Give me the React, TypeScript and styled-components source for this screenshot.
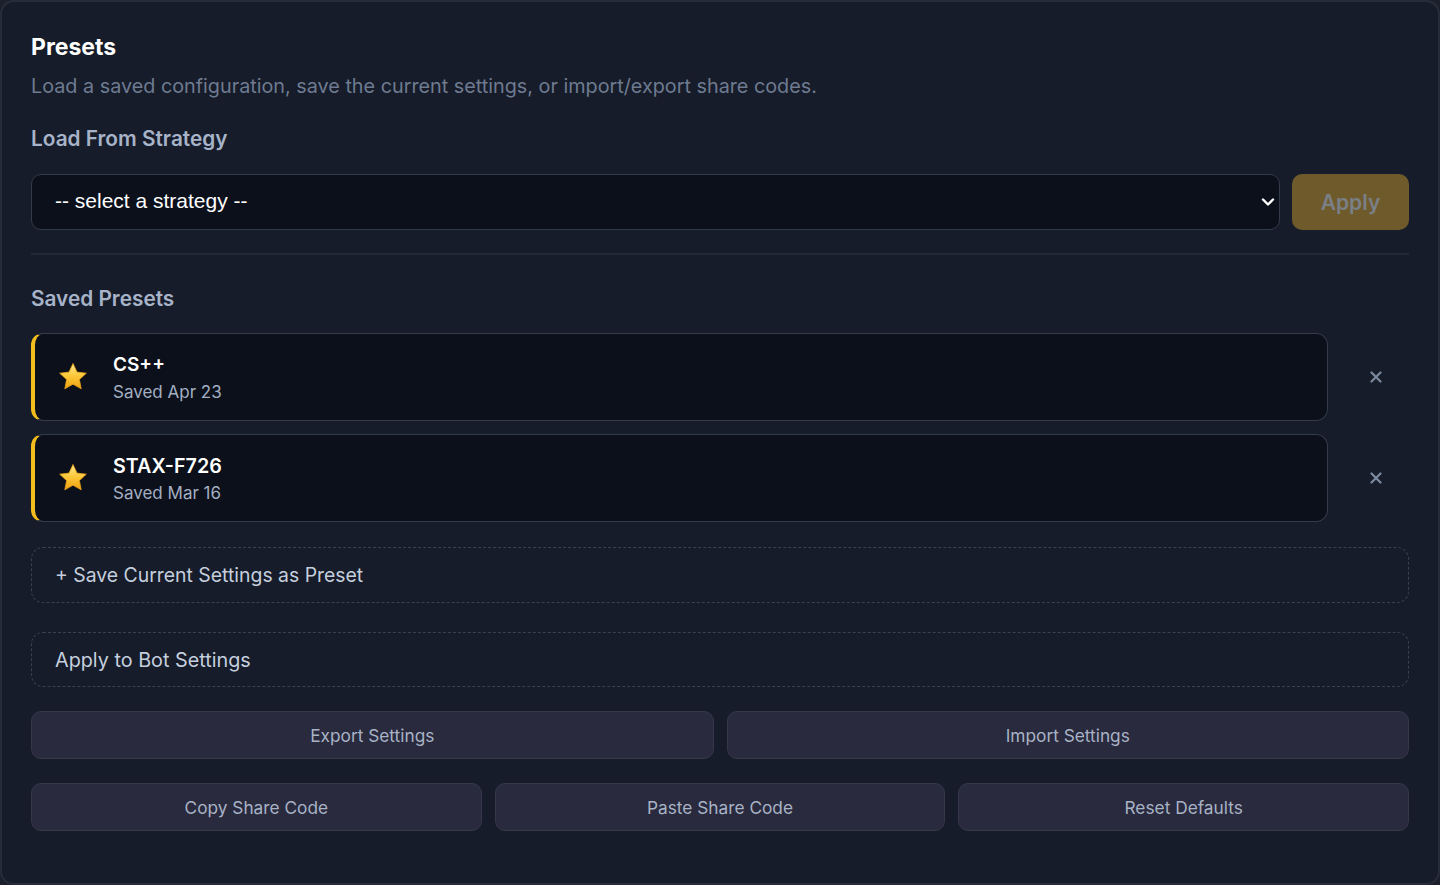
import styled, { createGlobalStyle } from "styled-components";

const GlobalStyle = createGlobalStyle`
    html, body {
        margin: 0;
        padding: 0;
        background: #1b202c;
    }
    * {
        box-sizing: border-box;
    }
`;

const Panel = styled.div`
    width: 1440px;
    height: 885px;
    background: #161c29;
    border: 2px solid #262c39;
    border-radius: 14px;
    padding: 28px 29px;
    font-family: Inter, "Noto Sans", sans-serif;
    display: flex;
    flex-direction: column;
`;

const Title = styled.h2`
    margin: 0;
    font-size: 23px;
    font-weight: 700;
    color: #ffffff;
    line-height: 34px;
`;

const Subtitle = styled.p`
    margin: 7px 0 0;
    font-size: 19.8px;
    color: #6e7b91;
    line-height: 30px;
`;

const Label = styled.h3`
    margin: ${props => props.$top ?? 20}px 0 0;
    font-size: 20.8px;
    font-weight: 600;
    color: #a7b3c8;
    line-height: 32px;
`;

const SelectRow = styled.div`
    display: flex;
    gap: 12px;
    margin-top: 19px;
`;

const SelectWrap = styled.div`
    position: relative;
    flex: 1;
`;

const Select = styled.select`
    width: 100%;
    height: 56px;
    appearance: none;
    background: #0b101b;
    border: 1px solid #333a49;
    border-radius: 10px;
    color: #ffffff;
    font-family: "Liberation Sans", Arial, sans-serif;
    font-size: 21px;
    padding: 0 23px 3px;
    outline: none;
`;

const Chevron = styled.svg`
    position: absolute;
    right: 5px;
    top: 21px;
    pointer-events: none;
`;

const ApplyButton = styled.button`
    width: 117px;
    height: 56px;
    border: none;
    border-radius: 10px;
    background: #6e5a2b;
    color: #7b7f86;
    font-family: Inter, sans-serif;
    font-size: 21px;
    font-weight: 600;
`;

const Divider = styled.hr`
    border: none;
    border-top: 2px solid #232937;
    margin: 23px 0 0;
    width: 100%;
`;

const PresetList = styled.div`
    display: flex;
    flex-direction: column;
    gap: 13px;
    margin-top: 18px;
`;

const PresetRow = styled.div`
    display: flex;
    align-items: center;
`;

const PresetCard = styled.div`
    width: 1297px;
    height: 88px;
    background: #0b101b;
    border: 1px solid #343b4a;
    border-left: 4px solid #f2bd1d;
    border-radius: 12px;
    display: flex;
    align-items: center;
    padding-left: 22px;
    gap: 24px;
`;

const PresetText = styled.div`
    display: flex;
    flex-direction: column;
`;

const PresetName = styled.span`
    font-size: ${props => props.$size}px;
    font-weight: 600;
    color: #ffffff;
    line-height: 26px;
    margin-top: 4px;
`;

const PresetDate = styled.span`
    font-size: 17px;
    color: #a4afc2;
    line-height: 28px;
`;

const RemoveButton = styled.button`
    background: none;
    border: none;
    padding: 0;
    margin-left: 40px;
    width: 16px;
    height: 16px;
    display: flex;
    align-items: center;
    justify-content: center;
`;

const DashedButton = styled.button`
    width: 100%;
    height: ${props => props.$h}px;
    margin-top: ${props => props.$top}px;
    background: transparent;
    border: 1px dashed #3a4152;
    border-radius: 12px;
    text-align: left;
    padding: 0 23px;
    font-family: Inter, sans-serif;
    font-size: ${props => props.$size}px;
    color: #c5cfde;
`;

const ButtonGrid = styled.div`
    display: grid;
    grid-template-columns: repeat(${props => props.$cols}, 1fr);
    gap: 13px;
    margin-top: ${props => props.$top}px;
`;

const GhostButton = styled.button`
    height: 48px;
    background: #292a3d;
    border: 1px solid #363849;
    border-radius: 10px;
    font-family: Inter, sans-serif;
    font-size: 17.3px;
    color: #a8b3c6;
`;

function Star() {
    return (
        <svg width="32" height="32" viewBox="0 0 32 32">
            <defs>
                <linearGradient id="starFill" x1="0" y1="0" x2="0" y2="1">
                    <stop offset="0" stopColor="#ffeb94" />
                    <stop offset="0.5" stopColor="#fcc737" />
                    <stop offset="1" stopColor="#f0a213" />
                </linearGradient>
            </defs>
            <path
                d="M16 2.5l4 8.6 9.3 1.1-6.9 6.4 1.8 9.2L16 23.2 7.8 27.8l1.8-9.2-6.9-6.4 9.3-1.1z"
                fill="url(#starFill)"
                stroke="#e9a015"
                strokeWidth="0.8"
                strokeLinejoin="round"
            />
        </svg>
    );
}

const presets = [
    { name: "CS++", date: "Saved Apr 23", size: 19 },
    { name: "STAX-F726", date: "Saved Mar 16", size: 19.7 },
];

function App() {
    return (
        <>
            <GlobalStyle />
            <Panel>
                <Title>Presets</Title>
                <Subtitle>Load a saved configuration, save the current settings, or import/export share codes.</Subtitle>
                <Label $top={22}>Load From Strategy</Label>
                <SelectRow>
                    <SelectWrap>
                        <Select defaultValue="">
                            <option value="">-- select a strategy --</option>
                        </Select>
                        <Chevron width="14" height="14" viewBox="0 0 14 14">
                            <path d="M2 4.5l5 5 5-5" fill="none" stroke="#ffffff" strokeWidth="2.4" strokeLinecap="round" strokeLinejoin="round" />
                        </Chevron>
                    </SelectWrap>
                    <ApplyButton>Apply</ApplyButton>
                </SelectRow>
                <Divider />
                <Label $top={28}>Saved Presets</Label>
                <PresetList>
                    {presets.map((p, i) => (
                        <PresetRow key={i}>
                            <PresetCard>
                                <Star />
                                <PresetText>
                                    <PresetName $size={p.size}>{p.name}</PresetName>
                                    <PresetDate>{p.date}</PresetDate>
                                </PresetText>
                            </PresetCard>
                            <RemoveButton>
                                <svg width="12" height="12" viewBox="0 0 12 12">
                                    <path d="M1.5 1.5l9 9M10.5 1.5l-9 9" stroke="#7c899e" strokeWidth="2.2" strokeLinecap="round" />
                                </svg>
                            </RemoveButton>
                        </PresetRow>
                    ))}
                </PresetList>
                <DashedButton $h={56} $top={25} $size={19.4}>+ Save Current Settings as Preset</DashedButton>
                <DashedButton $h={55} $top={29} $size={19.8}>Apply to Bot Settings</DashedButton>
                <ButtonGrid $cols={2} $top={24}>
                    <GhostButton>Export Settings</GhostButton>
                    <GhostButton>Import Settings</GhostButton>
                </ButtonGrid>
                <ButtonGrid $cols={3} $top={24}>
                    <GhostButton>Copy Share Code</GhostButton>
                    <GhostButton>Paste Share Code</GhostButton>
                    <GhostButton>Reset Defaults</GhostButton>
                </ButtonGrid>
            </Panel>
        </>
    );
}

export default App;
